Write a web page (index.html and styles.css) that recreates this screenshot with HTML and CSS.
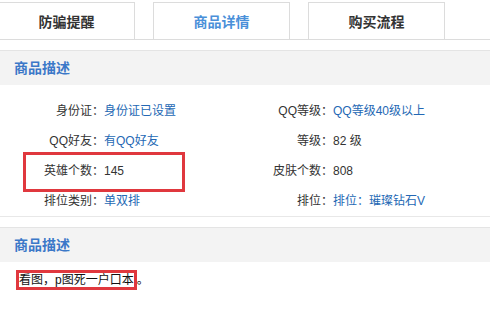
FILE: index.html
```html
<!DOCTYPE html>
<html lang="zh-CN">
<head>
    <meta charset="UTF-8">
    <meta name="viewport" content="width=device-width, initial-scale=1.0">
    <title>商品详情</title>
    <link rel="stylesheet" href="styles.css">
</head>
<body>

    <div class="tabs">
        <div class="tab">防骗提醒</div>
        <div class="tab active">商品详情</div>
        <div class="tab">购买流程</div>
    </div>

    <div class="section">
        <div class="section-title">商品描述</div>
        <div class="props">
            <div class="label">身份证：</div>
            <div class="value link">身份证已设置</div>
            <div class="label">QQ等级：</div>
            <div class="value link">QQ等级40级以上</div>

            <div class="label">QQ好友：</div>
            <div class="value link">有QQ好友</div>
            <div class="label">等级：</div>
            <div class="value">82 级</div>

            <div class="label">英雄个数：</div>
            <div class="value">145</div>
            <div class="label">皮肤个数：</div>
            <div class="value">808</div>

            <div class="label">排位类别：</div>
            <div class="value link">单双排</div>
            <div class="label">排位：</div>
            <div class="value link">排位：璀璨钻石V</div>

            <div class="mark"></div>
        </div>
    </div>

    <div class="section">
        <div class="section-title">商品描述</div>
        <div class="desc"><span class="boxed">看图，p图死一户口本</span>。</div>
    </div>

</body>
</html>
```

FILE: styles.css
```css
body {
    margin: 0;
    padding: 0;
    background-color: #fff;
    color: #333;
    font-family: "Liberation Sans", "Noto Sans CJK SC", sans-serif;
    font-size: 12px;
    text-spacing-trim: space-all;
    overflow: hidden;
}

.tabs {
    display: flex;
    gap: 18px;
    padding-top: 2px;
    margin-left: -2px;
    border-bottom: 1px solid #dcdcdc;
}

.tab {
    width: 135px;
    height: 36px;
    border: 1px solid #dcdcdc;
    border-bottom: none;
    display: flex;
    justify-content: center;
    align-items: center;
    font-size: 14px;
    font-weight: bold;
    color: #333;
}

.tab.active {
    color: #4a90d9;
}

.section {
    margin-top: 10px;
}

.section-title {
    height: 34px;
    line-height: 34px;
    padding-left: 14px;
    background-color: #f3f3f3;
    border-top: 1px solid #e4e4e4;
    color: #3b78c8;
    font-size: 14px;
    font-weight: bold;
}

.props {
    position: relative;
    display: grid;
    grid-template-columns: 104px 141px 88px 1fr;
    grid-auto-rows: 30px;
    padding-top: 11px;
    border-bottom: 1px solid #e8e8e8;
}

.label,
.value {
    line-height: 30px;
    white-space: nowrap;
}

.label {
    text-align: right;
}

.link {
    color: #2468b4;
}

.mark {
    position: absolute;
    left: 23px;
    top: 67px;
    width: 156px;
    height: 34px;
    border: 3px solid #e0383e;
}

.desc {
    padding: 7px 16px 0;
    line-height: 23px;
    color: #111;
}

.boxed {
    border: 3px solid #e0383e;
}
```
